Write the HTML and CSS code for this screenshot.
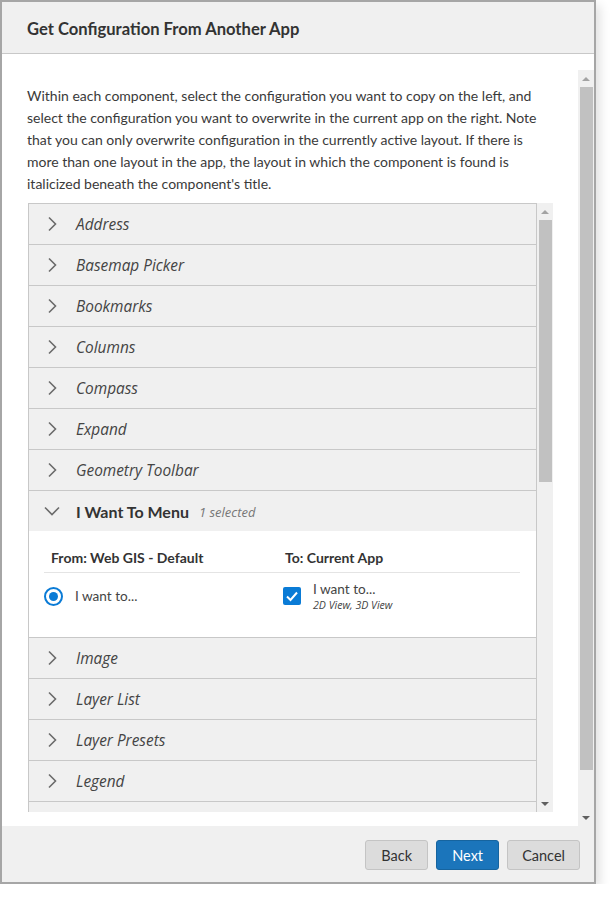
FILE: index.html
```html
<!DOCTYPE html>
<html>
<head>
<meta charset="utf-8">
<link rel="stylesheet" href="styles.css">
</head>
<body>
<div class="dialog">
  <header class="dlg-head"><h1 class="dlg-title">Get Configuration From Another App</h1></header>
  <div class="dlg-body">
    <div class="scroll">
      <div class="scroll-content">
        <p class="intro">Within each component, select the configuration you want to copy on the left, and<br>select the configuration you want to overwrite in the current app on the right. Note<br>that you can only overwrite configuration in the currently active layout. If there is<br>more than one layout in the app, the layout in which the component is found is<br>italicized beneath the component's title.</p>
        <div class="list">
          <div class="list-items">
            <div class="item"><svg class="chev" width="10" height="16" viewBox="0 0 10 16"><path d="M2 1.5 L8.5 8 L2 14.5"/></svg><span class="name">Address</span></div>
            <div class="item"><svg class="chev" width="10" height="16" viewBox="0 0 10 16"><path d="M2 1.5 L8.5 8 L2 14.5"/></svg><span class="name">Basemap Picker</span></div>
            <div class="item"><svg class="chev" width="10" height="16" viewBox="0 0 10 16"><path d="M2 1.5 L8.5 8 L2 14.5"/></svg><span class="name">Bookmarks</span></div>
            <div class="item"><svg class="chev" width="10" height="16" viewBox="0 0 10 16"><path d="M2 1.5 L8.5 8 L2 14.5"/></svg><span class="name">Columns</span></div>
            <div class="item"><svg class="chev" width="10" height="16" viewBox="0 0 10 16"><path d="M2 1.5 L8.5 8 L2 14.5"/></svg><span class="name">Compass</span></div>
            <div class="item"><svg class="chev" width="10" height="16" viewBox="0 0 10 16"><path d="M2 1.5 L8.5 8 L2 14.5"/></svg><span class="name">Expand</span></div>
            <div class="item"><svg class="chev" width="10" height="16" viewBox="0 0 10 16"><path d="M2 1.5 L8.5 8 L2 14.5"/></svg><span class="name">Geometry Toolbar</span></div>
            <div class="item open"><svg class="chev-down" width="16" height="10" viewBox="0 0 16 10"><path d="M1 1.5 L8 8.5 L15 1.5"/></svg><span class="name-open">I Want To Menu</span><span class="count">1 selected</span></div>
            <div class="panel">
              <div class="cols head">
                <div class="col-h first">From: Web GIS - Default</div>
                <div class="col-h second">To: Current App</div>
              </div>
              <div class="cols row">
                <div class="cell">
                  <span class="radio"><span class="dot"></span></span>
                  <span class="opt">I want to...</span>
                </div>
                <div class="cell">
                  <span class="check"><svg width="14" height="14" viewBox="0 0 14 14"><path d="M2 7.5 L5.5 11 L12 3.5"/></svg></span>
                  <span class="opt-stack"><span class="opt2">I want to...</span><span class="sub">2D View, 3D View</span></span>
                </div>
              </div>
            </div>
            <div class="item"><svg class="chev" width="10" height="16" viewBox="0 0 10 16"><path d="M2 1.5 L8.5 8 L2 14.5"/></svg><span class="name">Image</span></div>
            <div class="item"><svg class="chev" width="10" height="16" viewBox="0 0 10 16"><path d="M2 1.5 L8.5 8 L2 14.5"/></svg><span class="name">Layer List</span></div>
            <div class="item"><svg class="chev" width="10" height="16" viewBox="0 0 10 16"><path d="M2 1.5 L8.5 8 L2 14.5"/></svg><span class="name">Layer Presets</span></div>
            <div class="item"><svg class="chev" width="10" height="16" viewBox="0 0 10 16"><path d="M2 1.5 L8.5 8 L2 14.5"/></svg><span class="name">Legend</span></div>
            <div class="item"></div>
          </div>
          <div class="sbar sbar-inner">
            <span class="arrow up"></span>
            <span class="thumb"></span>
            <span class="fill"></span>
            <span class="arrow down"></span>
          </div>
        </div>
      </div>
      <div class="sbar sbar-outer">
        <span class="arrow up"></span>
        <span class="thumb"></span>
        <span class="fill"></span>
        <span class="arrow down"></span>
      </div>
    </div>
  </div>
  <footer class="dlg-foot">
    <button class="btn">Back</button>
    <button class="btn primary">Next</button>
    <button class="btn">Cancel</button>
  </footer>
</div>
</body>
</html>
```
FILE: styles.css
```css
* { box-sizing: border-box; }
html, body { margin: 0; padding: 0; background: #ffffff; }
body { font-family: Lato, "Open Sans", sans-serif; color: #333; }

.dialog {
  width: 596px;
  height: 884px;
  border: 2px solid #a6a6a6;
  background: #fff;
  display: flex;
  flex-direction: column;
  box-shadow: 4px 5px 10px rgba(0,0,0,0.12);
}

.dlg-head {
  height: 52px;
  background: #f0f0f0;
  border-bottom: 1px solid #c8c8c8;
  display: flex;
  align-items: center;
  padding-left: 25px;
  flex: none;
}
.dlg-title {
  margin: 0;
  font-size: 16.6px;
  font-weight: 700;
  color: #333;
  padding-top: 2px;
}

.dlg-body {
  height: 772px;
  padding-top: 16px;
  flex: none;
}
.scroll {
  height: 756px;
  display: flex;
}
.scroll-content {
  flex: 1;
  overflow: hidden;
  padding: 15px 25px 0 25px;
}
.intro {
  margin: 0;
  font-size: 14px;
  line-height: 22px;
  color: #3a3a3a;
  white-space: nowrap;
}

.list {
  margin-top: 8px;
  margin-left: 1px;
  height: 609px;
  display: flex;
  overflow: hidden;
}
.list-items {
  width: 509px;
  border-left: 1px solid #c8c8c8;
  border-right: 1px solid #c8c8c8;
  flex: none;
}
.item {
  height: 41px;
  border-top: 1px solid #c8c8c8;
  background: #f0f0f0;
  display: flex;
  align-items: center;
  padding-left: 18px;
}
.chev { flex: none; }
.chev path, .chev-down path {
  fill: none;
  stroke: #6b6b6b;
  stroke-width: 1.6;
}
.name {
  margin-left: 19px;
  font-family: "Open Sans", sans-serif;
  font-size: 15.4px;
  font-style: italic;
  color: #444;
}
.item.open { padding-left: 15px; }
.name-open {
  margin-left: 16px;
  font-size: 16px;
  font-weight: 700;
  color: #333;
}
.count {
  margin-left: 10px;
  font-family: "Open Sans", sans-serif;
  font-size: 13px;
  font-style: italic;
  color: #777;
  padding-top: 2px;
}

.panel {
  height: 106px;
  background: #fff;
  padding: 16px 16px 0 15px;
}
.cols {
  display: grid;
  grid-template-columns: 238px 238px;
}
.cols.head {
  border-bottom: 1px solid #e4e4e4;
  padding-bottom: 3px;
}
.col-h {
  font-size: 14px;
  font-weight: 700;
  line-height: 22px;
  color: #333;
}
.col-h.first { padding-left: 7px; }
.col-h.second { padding-left: 3px; }
.cols.row { padding-top: 8px; }
.cell {
  display: flex;
  align-items: flex-start;
}
.radio {
  margin-top: 6px;
  width: 19px;
  height: 19px;
  border-radius: 50%;
  border: 2px solid #0a7bd6;
  display: flex;
  align-items: center;
  justify-content: center;
  flex: none;
}
.dot {
  width: 9px;
  height: 9px;
  border-radius: 50%;
  background: #0a7bd6;
}
.opt {
  margin-left: 12px;
  margin-top: 6px;
  font-size: 13.6px;
  line-height: 19px;
  color: #444;
}
.check {
  margin-top: 6px;
  margin-left: 1px;
  width: 18px;
  height: 18px;
  border-radius: 2px;
  background: #0a7bd6;
  display: flex;
  align-items: center;
  justify-content: center;
  flex: none;
}
.check path {
  fill: none;
  stroke: #fff;
  stroke-width: 2;
}
.opt-stack {
  margin-left: 12px;
  display: flex;
  flex-direction: column;
}
.opt2 {
  font-size: 13.6px;
  line-height: 16px;
  color: #444;
}
.sub {
  font-family: "Open Sans", sans-serif;
  font-size: 10.6px;
  font-style: italic;
  line-height: 16px;
  color: #444;
}

.sbar {
  width: 16px;
  flex: none;
  background: #f0f0f0;
  display: flex;
  flex-direction: column;
  align-items: center;
}
.sbar .arrow {
  height: 17px;
  flex: none;
  display: flex;
  align-items: center;
  justify-content: center;
  width: 100%;
}
.sbar .arrow::before {
  content: "";
  width: 0;
  height: 0;
  border-left: 4px solid transparent;
  border-right: 4px solid transparent;
}
.sbar .arrow.up::before { border-bottom: 4px solid #a3a3a3; }
.sbar .arrow.down::before { border-top: 4px solid #606060; }
.sbar .thumb {
  width: 13px;
  background: #c1c1c1;
  flex: none;
}
.sbar .fill { flex: 1; }
.sbar-inner .thumb { height: 262px; }
.sbar-outer .thumb { height: 683px; }

.dlg-foot {
  flex: 1;
  background: #f0f0f0;
  display: flex;
  justify-content: flex-end;
  align-items: flex-start;
  gap: 8px;
  padding: 14px 14px 0 0;
}
.btn {
  height: 30px;
  font-family: Lato, "Open Sans", sans-serif;
  font-size: 14.5px;
  color: #333;
  background: #dcdcdc;
  border: 1px solid #c4c4c4;
  border-radius: 3px;
  padding: 0 14px;
  min-width: 63px;
}
.btn.primary {
  background: #1b75bb;
  border-color: #16649f;
  color: #fff;
}
```
